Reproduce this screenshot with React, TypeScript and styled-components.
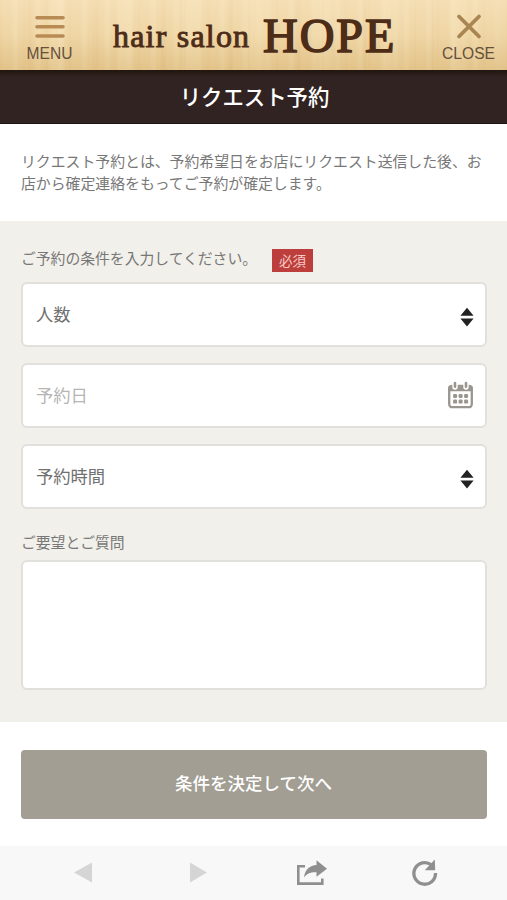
import React from 'react';
import styled, { createGlobalStyle } from 'styled-components';

const GlobalStyle = createGlobalStyle`
  *, *::before, *::after { box-sizing: border-box; }
  body {
    margin: 0;
    background: #fff;
    color: #777;
    font-family: "Noto Sans CJK JP", "Noto Sans", sans-serif;
  }
  button, textarea { font-family: inherit; }
`;

const Screen = styled.div`
  display: flex;
  flex-direction: column;
  width: 100%;
  height: 900px;
  overflow: hidden;
`;

const Header = styled.header`
  display: flex;
  flex: none;
  justify-content: space-between;
  height: 70px;
  background:
    linear-gradient(180deg, rgba(255, 236, 205, 0.5) 0%, rgba(255, 236, 200, 0.2) 50%, rgba(190, 140, 60, 0.2) 100%),
    repeating-linear-gradient(90deg, rgba(180, 125, 50, 0.04) 0 1px, transparent 3px 11px, rgba(255, 250, 225, 0.14) 14px 17px, transparent 19px 23px),
    repeating-linear-gradient(90deg, transparent 0 26px, rgba(185, 130, 55, 0.06) 29px 31px, transparent 33px 47px, rgba(255, 245, 215, 0.2) 52px 60px, transparent 67px),
    #ebd09c;
`;

const HeaderButton = styled.button<{ $width: number }>`
  display: flex;
  flex-direction: column;
  align-items: center;
  width: ${({ $width }) => $width}px;
  padding: 13px 0 0;
  border: 0;
  background: none;
  color: #65503c;
  font: 15.6px/20px "Liberation Sans", Arial, sans-serif;

  svg { display: block; margin-bottom: 4px; }
`;

const Logo = styled.h1`
  display: flex;
  align-items: baseline;
  flex: 1;
  margin: 0;
  padding: 6px 0 0 14px;
  color: #4d2c18;
  font-family: "Liberation Serif", serif;
  line-height: 60px;
  white-space: nowrap;
`;

const LogoSmall = styled.span`
  width: 150px;
  padding-bottom: 5px;
  font-size: 32px;
  font-weight: 400;
  letter-spacing: 1.2px;
  -webkit-text-stroke: 0.9px #4d2c18;
  transform: translateY(-5px);
`;

const LogoLarge = styled.span`
  font-size: 48px;
  font-weight: 400;
  letter-spacing: 2px;
  -webkit-text-stroke: 1.6px #4d2c18;
`;

const TitleBar = styled.h2`
  flex: none;
  height: 54px;
  margin: 0;
  padding-left: 2px;
  border-bottom: 1px solid #1d1312;
  background: linear-gradient(180deg, #21150f 0, #302322 7px, #302322 100%);
  color: #fff;
  font-size: 21.4px;
  font-weight: 500;
  line-height: 51px;
  text-align: center;
`;

const Intro = styled.p`
  flex: none;
  height: 97px;
  margin: 0;
  padding: 26px 21px 0;
  font-size: 14.86px;
  line-height: 22px;
`;

const Form = styled.form`
  display: flex;
  flex: none;
  flex-direction: column;
  height: 501px;
  padding: 26px 20px 0 21px;
  background: #f2f0ea;
`;

const LabelRow = styled.div`
  display: flex;
  align-items: flex-start;
  height: 35px;
  gap: 15px;
`;

const Label = styled.label`
  font-size: 14.84px;
  line-height: 22px;
  letter-spacing: -0.02px;
`;

const Required = styled.span`
  width: 41px;
  height: 23px;
  margin-top: 2px;
  background: #bd3f3d;
  color: #f5ccc4;
  font-size: 13.5px;
  line-height: 22px;
  text-align: center;
`;

const Fields = styled.div`
  display: flex;
  flex-direction: column;
  gap: 16px;
  margin-bottom: 22px;
`;

const Field = styled.div<{ $placeholder?: boolean }>`
  display: flex;
  align-items: center;
  justify-content: space-between;
  height: 65px;
  padding: 0 ${({ $placeholder }) => ($placeholder ? 12 : 11)}px 2px 14px;
  border: 2px solid #e2e0dc;
  border-radius: 6px;
  background: #fff;
  color: ${({ $placeholder }) => ($placeholder ? '#b5b5b5' : '#707070')};
  font-size: 17.3px;
  line-height: 26px;
  padding-left: 13px;
  padding-right: ${({ $placeholder }) => ($placeholder ? 11 : 10)}px;
`;

const SortGlyph = styled.svg`
  display: block;
  margin-top: 6px;
`;

const Notes = styled.textarea`
  display: block;
  height: 130px;
  margin: 7px 0 0;
  padding: 14px;
  border: 2px solid #e2e0dc;
  border-radius: 6px;
  background: #fff;
  outline: 0;
  resize: none;
`;

const Actions = styled.div`
  flex: none;
  height: 124px;
  padding: 28px 20px 0 21px;
`;

const Submit = styled.button`
  display: block;
  width: 100%;
  height: 69px;
  padding: 0 1px 4px 0;
  border: 0;
  border-radius: 4px;
  background: #a29e93;
  color: #fff;
  font-size: 17.5px;
  font-weight: 500;
`;

const Toolbar = styled.nav`
  display: grid;
  flex: 1;
  grid-template-columns: repeat(4, 114px);
  justify-content: center;
  align-items: center;
  justify-items: center;
  background: #f8f8f8;
`;

const ToolButton = styled.button`
  display: flex;
  padding: 0;
  border: 0;
  background: none;
`;

const SortIcon = () => (
  <SortGlyph width="16" height="20" viewBox="0 0 16 20" fill="#222">
    <path d="M8 .8 14.6 8.7H1.4ZM8 19.4 14.6 11.6H1.4Z" />
  </SortGlyph>
);

const CalendarIcon = () => (
  <svg width="27" height="28" viewBox="0 0 27 28">
    <rect x="2.2" y="5" width="22.6" height="21.2" rx="3" fill="#fff" stroke="#99968f" strokeWidth="2.3" />
    <path d="M1.2 10.3V6.8q0-2.5 2.5-2.5h19.6q2.5 0 2.5 2.5v3.5Z" fill="#99968f" />
    <path d="M8 2v4M19 2v4" stroke="#fff" strokeWidth="5.4" strokeLinecap="round" />
    <path d="M8 2v3.8M19 2v3.8" stroke="#99968f" strokeWidth="2.6" strokeLinecap="round" />
    <g fill="#99968f">
      {[6.1, 11.6, 17.1].map((x) =>
        [13, 18.6].map((y) => <rect key={`${x}-${y}`} x={x} y={y} width="4" height="4" rx="1.2" />),
      )}
    </g>
  </svg>
);

export default function App() {
  return (
    <Screen>
      <GlobalStyle />
      <Header>
        <HeaderButton $width={99} type="button">
          <svg width="30" height="27" viewBox="0 0 30 27">
            <path d="M2 4.7h26M2 13.8h26M2 23h26" stroke="#b98b54" strokeWidth="3.6" strokeLinecap="round" />
          </svg>
          MENU
        </HeaderButton>
        <Logo>
          <LogoSmall>hair salon</LogoSmall>
          <LogoLarge>HOPE</LogoLarge>
        </Logo>
        <HeaderButton $width={77} type="button">
          <svg width="26" height="27" viewBox="0 0 26 27">
            <path d="m3 3.5 20 20M23 3.5l-20 20" stroke="#a98552" strokeWidth="3.8" strokeLinecap="round" />
          </svg>
          CLOSE
        </HeaderButton>
      </Header>

      <TitleBar>リクエスト予約</TitleBar>
      <Intro>リクエスト予約とは、予約希望日をお店にリクエスト送信した後、お店から確定連絡をもってご予約が確定します。</Intro>

      <Form>
        <LabelRow>
          <Label>ご予約の条件を入力してください。</Label>
          <Required>必須</Required>
        </LabelRow>
        <Fields>
          <Field>人数<SortIcon /></Field>
          <Field $placeholder>予約日<CalendarIcon /></Field>
          <Field>予約時間<SortIcon /></Field>
        </Fields>
        <Label htmlFor="notes">ご要望とご質問</Label>
        <Notes id="notes" />
      </Form>

      <Actions>
        <Submit type="button">条件を決定して次へ</Submit>
      </Actions>

      <Toolbar>
        <ToolButton type="button" aria-label="戻る">
          <svg width="20" height="22" viewBox="0 0 20 22"><path d="M1 10.5 19 .5v20Z" fill="#d5d5d5" /></svg>
        </ToolButton>
        <ToolButton type="button" aria-label="進む">
          <svg width="20" height="22" viewBox="0 0 20 22"><path d="M20 10.5 3 .5v20Z" fill="#d5d5d5" /></svg>
        </ToolButton>
        <ToolButton type="button" aria-label="共有">
          <svg width="32" height="26" viewBox="0 0 32 26">
            <path d="M10 6.2H3.3v17.4h24v-5.2" fill="none" stroke="#8f8f8f" strokeWidth="2.6" />
            <path d="M9 17.5C10 9.5 15 5.3 21.5 5.1V.3L32 8.8l-10.5 8v-4.6c-6-.3-9.5 1.2-12.5 5.3Z" fill="#8f8f8f" />
          </svg>
        </ToolButton>
        <ToolButton type="button" aria-label="再読み込み">
          <svg width="26" height="28" viewBox="0 0 26 28">
            <path d="M23.5 14A10.8 10.8 0 1 1 19.5 6" fill="none" stroke="#8f8f8f" strokeWidth="3.3" />
            <path d="m22.8.5.4 10.8H12.8Z" fill="#8f8f8f" />
          </svg>
        </ToolButton>
      </Toolbar>
    </Screen>
  );
}
